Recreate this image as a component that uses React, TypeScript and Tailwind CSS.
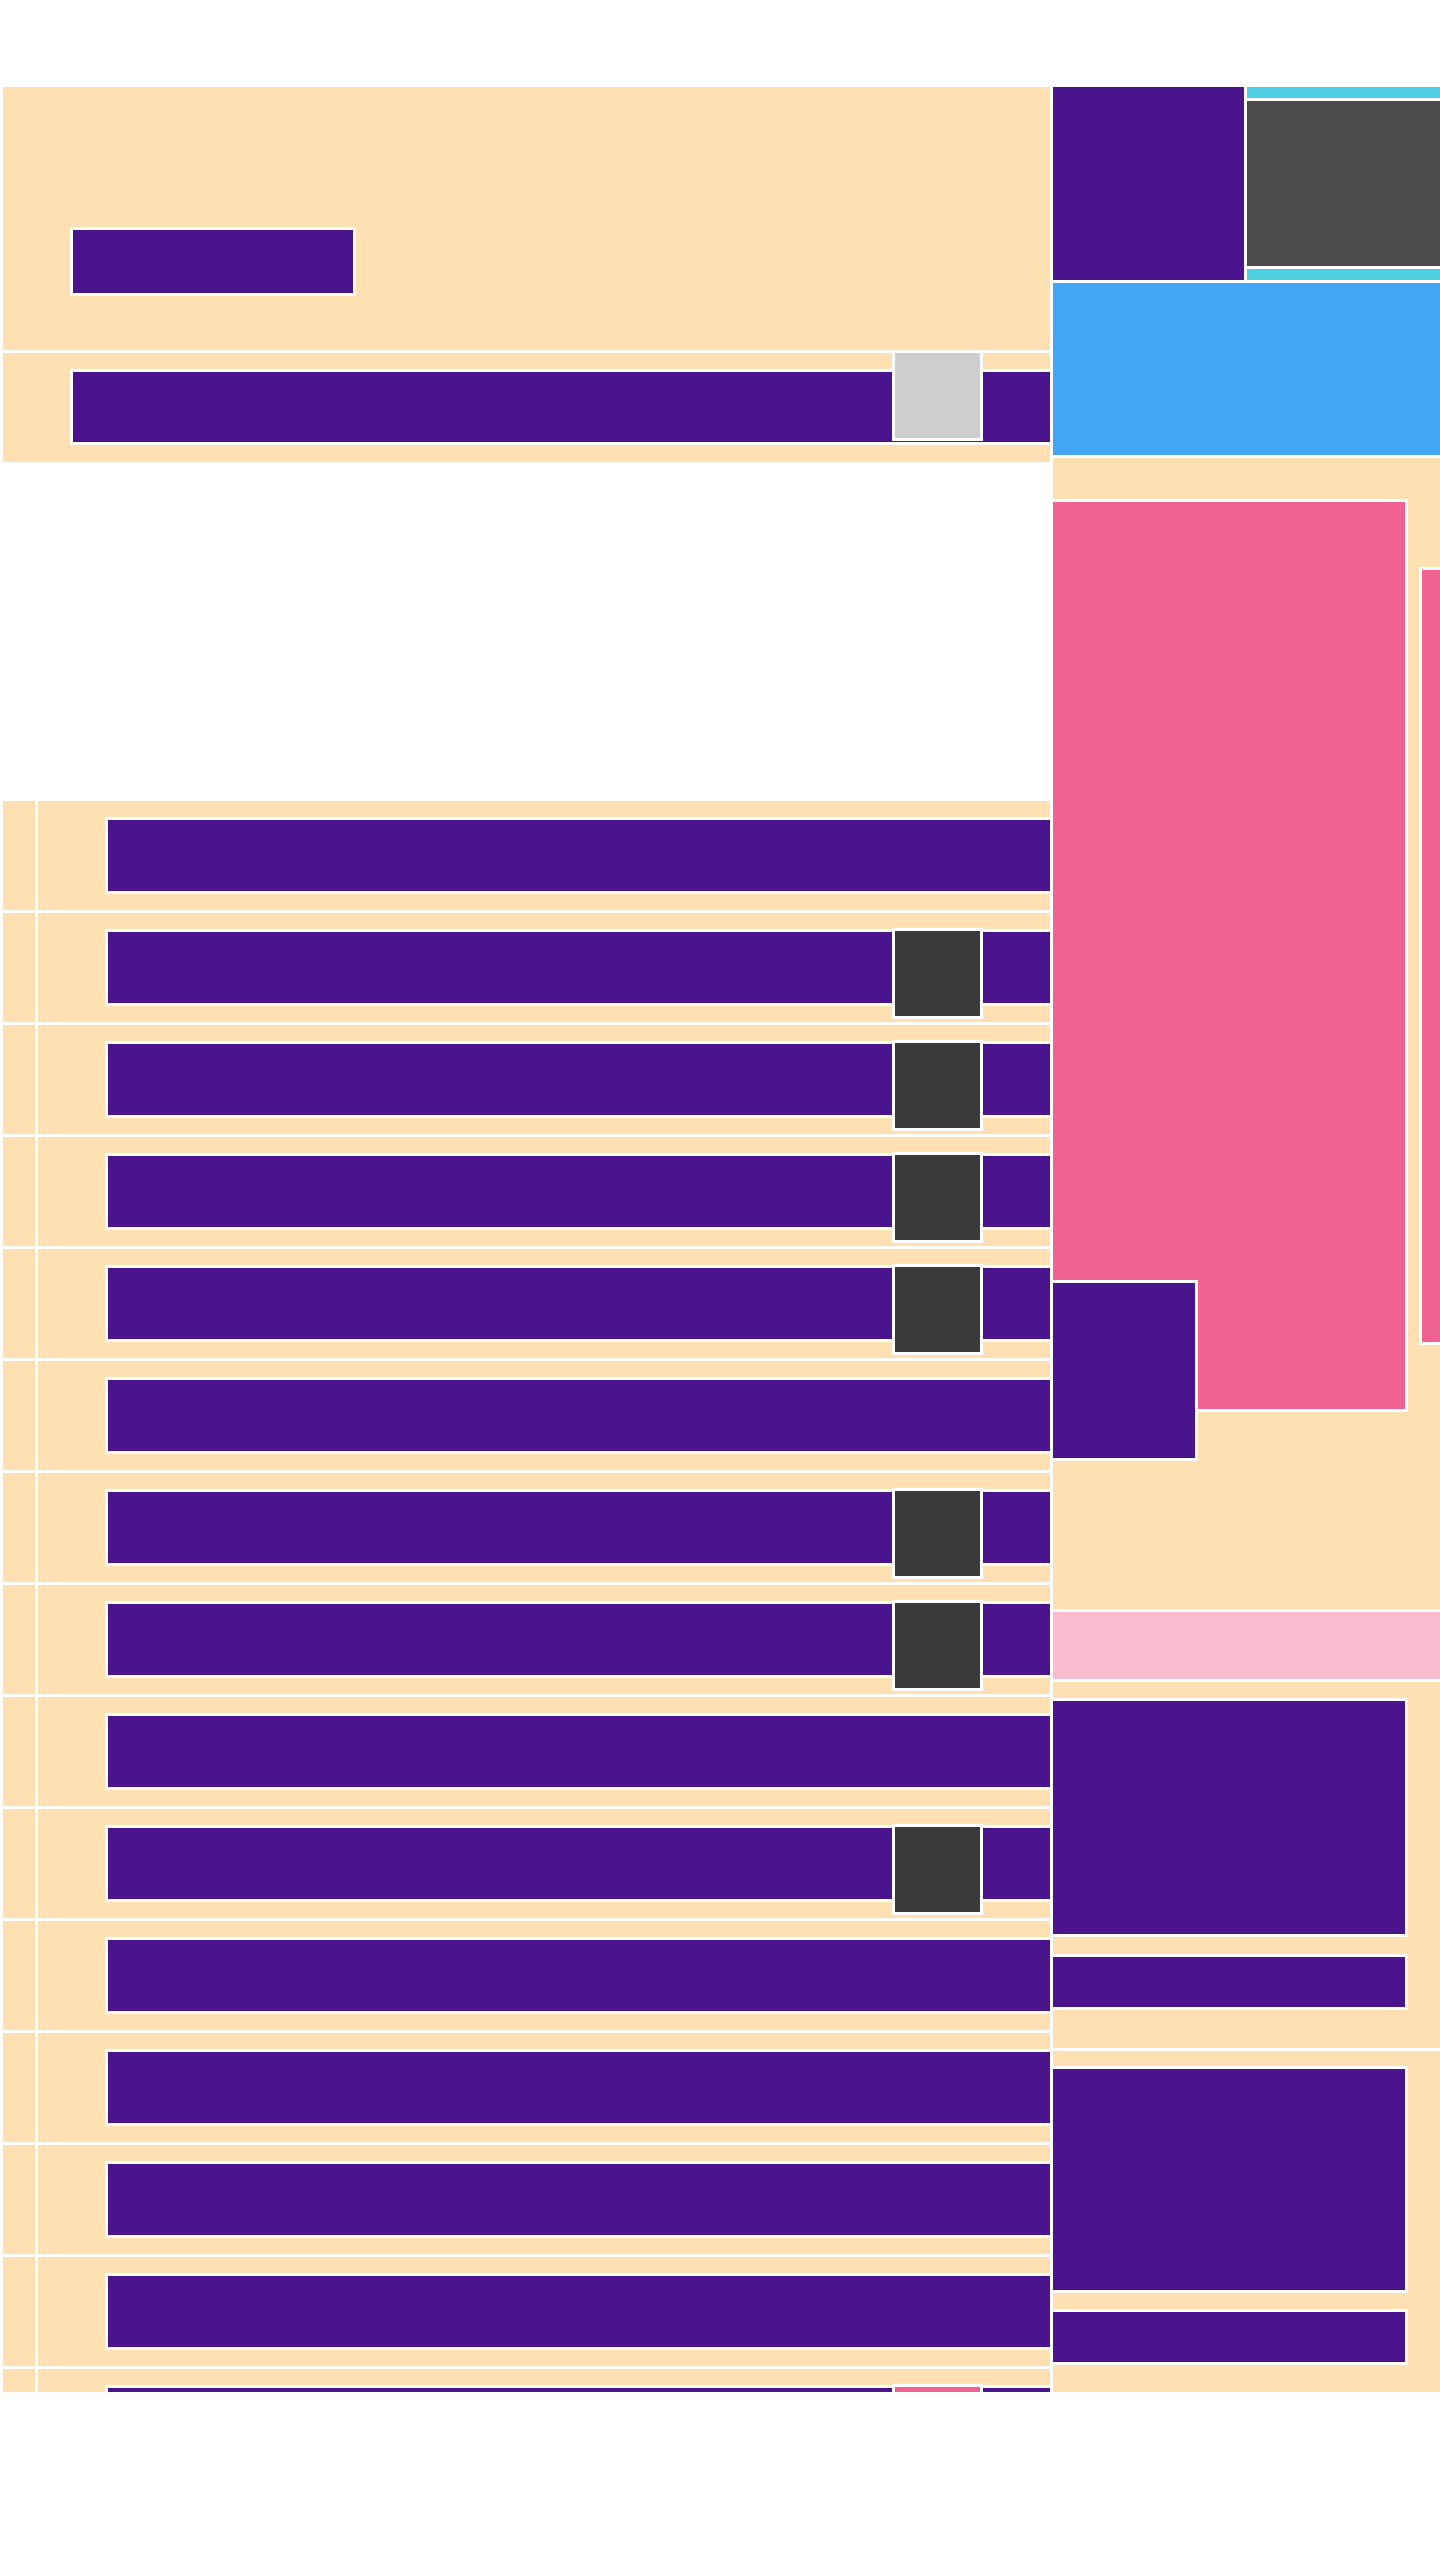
import React from "react";

const rows: ("dark" | "none" | "pink")[] = [
  "none", "dark", "dark", "dark", "dark", "none", "dark", "dark",
  "none", "dark", "none", "none", "none", "none", "pink",
];

function Row({ kind }: { kind: "dark" | "none" | "pink" }) {
  return (
    <div className="relative flex h-[109px] shrink-0 gap-[3px]">
      <div className="w-[32px] shrink-0 bg-[#ffe0b2]" />
      <div className="flex-1 bg-[#ffe0b2] pl-[67px] pt-[16px]">
        <div className="h-[77px] border-[3px] border-r-0 border-white bg-[#4a148c]" />
      </div>
      {kind === "dark" && (
        <div className="absolute left-[889px] top-[15px] h-[91px] w-[91px] border-[3px] border-white bg-[#3a3a3a]" />
      )}
      {kind === "pink" && (
        <div className="absolute left-[889px] top-[15px] h-[91px] w-[91px] border-[3px] border-white bg-[#f06292]" />
      )}
    </div>
  );
}

export default function App() {
  return (
    <div className="min-h-[2560px] w-[1440px] overflow-hidden bg-white pt-[87px]">
      <div className="flex h-[2305px] items-start gap-[3px] overflow-hidden pl-[3px]">
        {/* Left column */}
        <div className="flex w-[1047px] shrink-0 flex-col">
          <div className="h-[263px] bg-[#ffe0b2] pl-[67px] pt-[140px]">
            <div className="h-[69px] w-[286px] border-[3px] border-white bg-[#4a148c]" />
          </div>
          <div className="relative mt-[3px] h-[109px] bg-[#ffe0b2] pl-[67px] pt-[16px]">
            <div className="h-[76px] border-[3px] border-r-0 border-white bg-[#4a148c]" />
            <div className="absolute left-[889px] top-[-3px] h-[91px] w-[91px] border-[3px] border-white bg-[#cecece]" />
          </div>
          <div className="mt-[339px] flex flex-col gap-[3px]">
            {rows.map((k, i) => (
              <Row key={i} kind={k} />
            ))}
          </div>
        </div>

        {/* Right column */}
        <div className="flex min-w-0 flex-1 flex-col gap-[3px]">
          <div className="flex h-[193px] gap-[3px]">
            <div className="w-[191px] shrink-0 bg-[#4a148c]" />
            <div className="flex flex-1 flex-col gap-[3px]">
              <div className="h-[11px] bg-[#4dd0e1]" />
              <div className="h-[165px] bg-[#4b4b4b]" />
              <div className="h-[11px] bg-[#4dd0e1]" />
            </div>
          </div>
          <div className="h-[172px] bg-[#42a5f5]" />
          <div className="flex h-[1151px] flex-col overflow-hidden bg-[#ffe0b2]">
            <div className="flex items-start">
              <div className="mt-[41px] h-[913px] w-[355px] shrink-0 border-[3px] border-l-0 border-white bg-[#f06292]" />
              <div className="ml-[11px] mt-[109px] h-[778px] w-[40px] shrink-0 border-[3px] border-white bg-[#f06292]" />
            </div>
            <div className="relative mt-[-132px] h-[181px] w-[145px] border-[3px] border-l-0 border-white bg-[#4a148c]" />
          </div>
          <div className="h-[67px] bg-[#f8bbd0]" />
          <div className="flex h-[366px] flex-col bg-[#ffe0b2] pt-[16px]">
            <div className="h-[239px] w-[355px] border-[3px] border-l-0 border-white bg-[#4a148c]" />
            <div className="mt-[17px] h-[56px] w-[355px] border-[3px] border-l-0 border-white bg-[#4a148c]" />
          </div>
          <div className="flex h-[341px] flex-col bg-[#ffe0b2] pt-[15px]">
            <div className="h-[227px] w-[355px] border-[3px] border-l-0 border-white bg-[#4a148c]" />
            <div className="mt-[16px] h-[56px] w-[355px] border-[3px] border-l-0 border-white bg-[#4a148c]" />
          </div>
        </div>
      </div>
    </div>
  );
}
